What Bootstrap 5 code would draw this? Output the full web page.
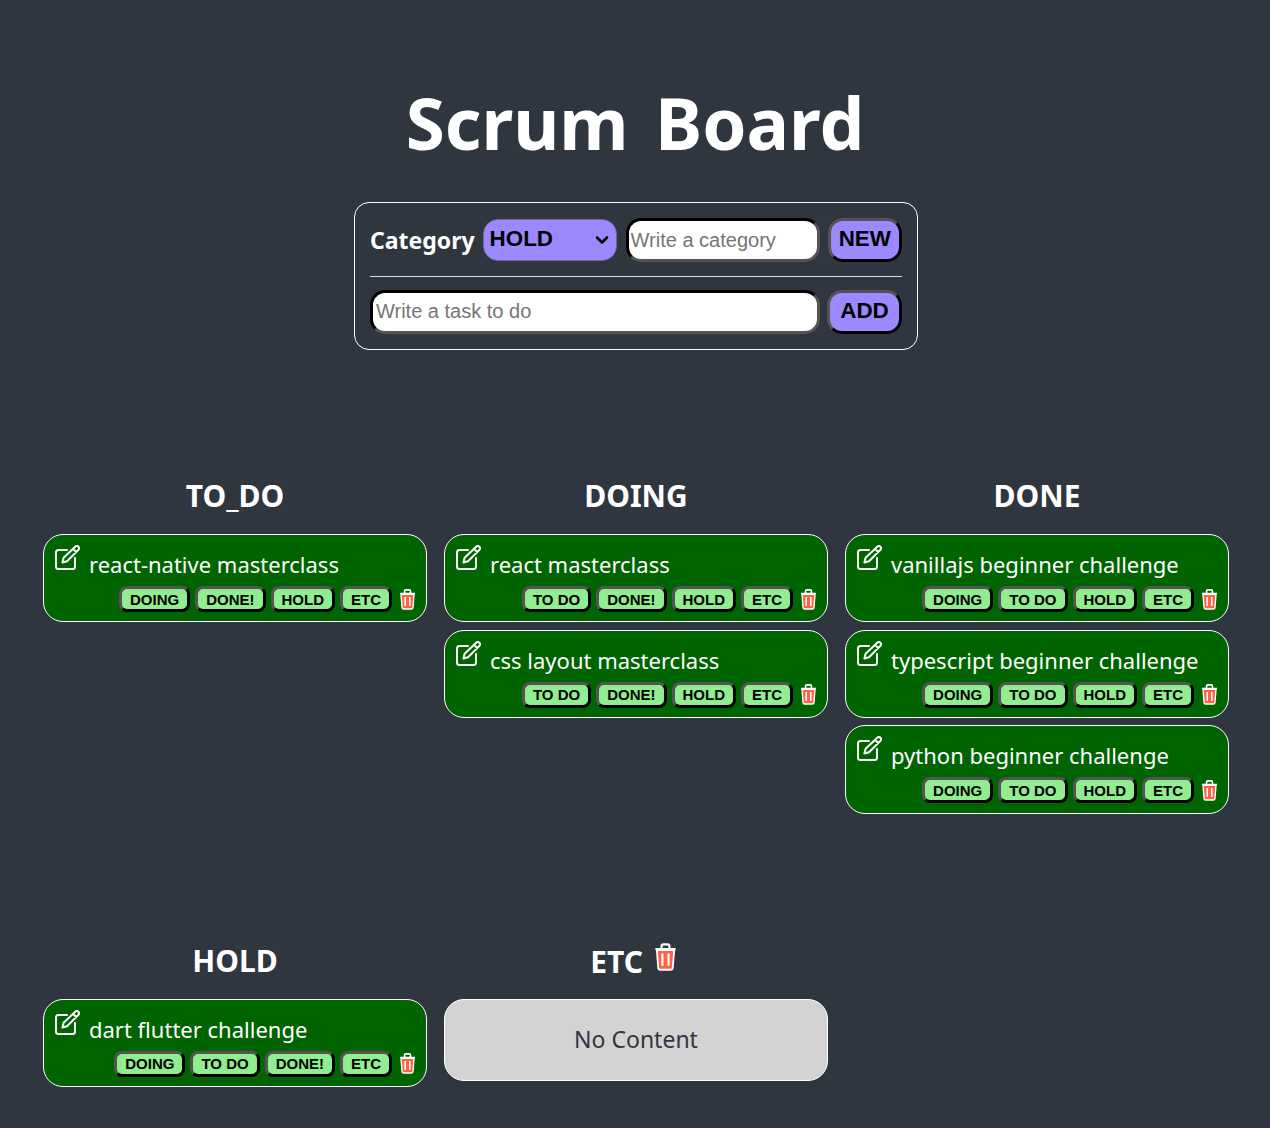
<!DOCTYPE html>
<html lang="en">
<head>
  <meta charset="UTF-8" />
  <title>Scrum Board</title>
  <link href="https://cdn.jsdelivr.net/npm/bootstrap@5.3.0/dist/css/bootstrap.min.css" rel="stylesheet"/>
  <style>
    body {
      background-color: #2f3640;
      color: #fff;
      font-family: "Noto Sans", "Open Sans", sans-serif;
      min-height: 1128px;
    }
    .board-title {
      font-size: 71px;
      font-weight: 700;
      line-height: 1;
      margin: 0;
      padding-top: 87px;
      height: 202px;
      word-spacing: 8px;
    }
    .entry-box {
      width: 564px;
      height: 148px;
      margin-left: 354px;
      border: 1px solid #fff;
      border-radius: 15px;
      padding: 15px 15px;
    }
    .entry-label { font-size: 23px; font-weight: 700; }
    .entry-rule { border-top: 1px solid #dcdde1; opacity: 1; margin: 14px 0 13px; }
    .cat-select {
      width: 135px;
      height: 42px;
      padding: 0 6px 3px;
      margin-right: 9px;
      font: 700 22.4px "Liberation Sans", sans-serif;
      color: #000;
      background-color: #9c88ff;
      background-image: url("data:image/svg+xml,%3csvg xmlns='http://www.w3.org/2000/svg' viewBox='0 0 16 16'%3e%3cpath fill='none' stroke='%23000' stroke-linecap='round' stroke-linejoin='round' stroke-width='2.600' d='M3 5.500l5 5 5-5'/%3e%3c/svg%3e");
      background-position: right 6px center;
      background-size: 16px 16px;
      border: 1px solid #6c6c9c;
      border-radius: 15px;
    }
    .text-entry {
      height: 44px;
      border: 3px inset #000;
      border-radius: 15px;
      padding: 0 3px 2px;
      font: 20px "Liberation Sans", sans-serif;
      background: #fff;
    }
    .text-entry::placeholder { color: #757575; }
    .cat-entry { width: 194px; padding: 0 2px; }
    .task-entry { width: 450px; }
    .push-btn {
      width: 75px;
      height: 44px;
      padding: 0 0 2px;
      border: 3px outset #000;
      border-radius: 15px;
      background: #9c88ff;
      color: #000;
      font: 700 22.4px "Liberation Sans", sans-serif;
    }
    .board-grid {
      display: grid;
      grid-template-columns: repeat(3, 384px);
      column-gap: 17px;
      padding: 0 43px;
    }
    .board-top { margin-top: 128px; }
    .board-bottom { margin-top: 122px; }
    .board-col-title {
      font-size: 30px;
      font-weight: 700;
      height: 35px;
      line-height: 35px;
      margin: 0 0 21px;
      text-align: center;
    }
    .board-col-title svg { margin: 0 5px 0 3px; vertical-align: 2px; }
    .task-card {
      height: 88.4px;
      background: #006400;
      border: 1px solid #fff;
      border-radius: 20px;
      padding: 12px 10px 0 10px;
      margin-bottom: 7.2px;
    }
    .task-name { font-size: 22px; line-height: 32px; height: 32px; gap: 9px; }
    .task-name svg { margin-top: -2px; }
    .task-name span { margin-top: 1px; }
    .task-actions { gap: 5px; margin-top: 7px; }
    .task-actions svg { margin-left: 2px; }
    .move-btn {
      height: 26px;
      padding: 0 8px;
      border: 3px outset #000;
      border-radius: 8px;
      background: #90ee90;
      color: #000;
      font: 700 15px "Liberation Sans", sans-serif;
    }
    .empty-card {
      height: 82px;
      background: #d3d3d3;
      border: 1px solid #fff;
      border-radius: 20px;
      color: #2f3640;
      font-size: 23px;
    }
  </style>
</head>
<body>

  <svg width="0" height="0" class="d-block">
    <symbol id="bin" viewBox="0 0 16 20">
      <path d="M.8 4.300h14.400M5.200 4V2.200c0-.7.5-1.300 1.200-1.300h3.200c.7 0 1.200.6 1.200 1.300V4" fill="none" stroke="#fff" stroke-width="1.600"/>
      <path d="M1.800 5h12.400l-1 12.700c-.1.800-.6 1.400-1.400 1.400H4.200c-.8 0-1.300-.6-1.400-1.400z" fill="#ff6347" stroke="#fff" stroke-width="1.300"/>
      <path d="M5.800 7.500v8.800M10.200 7.500v8.800" stroke="#fff" stroke-width="1.500"/>
    </symbol>
    <symbol id="pen" viewBox="0 0 26 26">
      <path d="M13 5H4.500C3 5 2 6 2 7.500v14C2 23 3 24 4.500 24h14c1.500 0 2.500-1 2.500-2.500V13" fill="none" stroke="#fff" stroke-width="2" stroke-linecap="round"/>
      <path d="M21.500 1.500c1-.8 2.200-.6 3 .3s.8 2 0 2.900L13 16.200l-4.600 1.300 1.200-4.700zM19 4l3.500 3.200" fill="none" stroke="#fff" stroke-width="2" stroke-linejoin="round"/>
    </symbol>
  </svg>

  <h1 class="board-title text-center">Scrum Board</h1>

  <div class="entry-box">
    <div class="d-flex align-items-center">
      <span class="entry-label me-2">Category</span>
      <select class="form-select cat-select" aria-label="Category">
        <option>TO_DO</option>
        <option>DOING</option>
        <option>DONE</option>
        <option selected>HOLD</option>
        <option>ETC</option>
      </select>
      <input class="text-entry cat-entry me-2" placeholder="Write a category" />
      <button class="push-btn">NEW</button>
    </div>
    <hr class="entry-rule" />
    <div class="d-flex align-items-center justify-content-between">
      <input class="text-entry task-entry" placeholder="Write a task to do" />
      <button class="push-btn">ADD</button>
    </div>
  </div>

  <div class="board-grid board-top" id="topRow"></div>
  <div class="board-grid board-bottom" id="bottomRow"></div>

  <script>
    const bin = (w, h) => `<svg width="${w}" height="${h}"><use href="#bin"/></svg>`;

    const card = (name, moves) => `
      <div class="task-card">
        <div class="task-name d-flex align-items-start">
          <svg width="26" height="26" class="flex-shrink-0"><use href="#pen"/></svg>
          <span>${name}</span>
        </div>
        <div class="task-actions d-flex justify-content-end align-items-center">
          ${moves.map(m => `<button class="move-btn">${m}</button>`).join("")}
          ${bin(17, 21)}
        </div>
      </div>`;

    const todo = ["DOING", "DONE!", "HOLD", "ETC"];
    const doing = ["TO DO", "DONE!", "HOLD", "ETC"];
    const done = ["DOING", "TO DO", "HOLD", "ETC"];
    const hold = ["DOING", "TO DO", "DONE!", "ETC"];

    const col = (title, body) => `<div><h2 class="board-col-title">${title}</h2>${body}</div>`;

    document.getElementById("topRow").innerHTML =
      col("TO_DO", card("react-native masterclass", todo)) +
      col("DOING", card("react masterclass", doing) + card("css layout masterclass", doing)) +
      col("DONE", card("vanillajs beginner challenge", done) + card("typescript beginner challenge", done) + card("python beginner challenge", done));

    document.getElementById("bottomRow").innerHTML =
      col("HOLD", card("dart flutter challenge", hold)) +
      col(`ETC ${bin(23, 28)}`, `<div class="empty-card d-flex align-items-center justify-content-center">No Content</div>`);
  </script>

  <script src="https://cdn.jsdelivr.net/npm/bootstrap@5.3.0/dist/js/bootstrap.bundle.min.js"></script>
</body>
</html>
